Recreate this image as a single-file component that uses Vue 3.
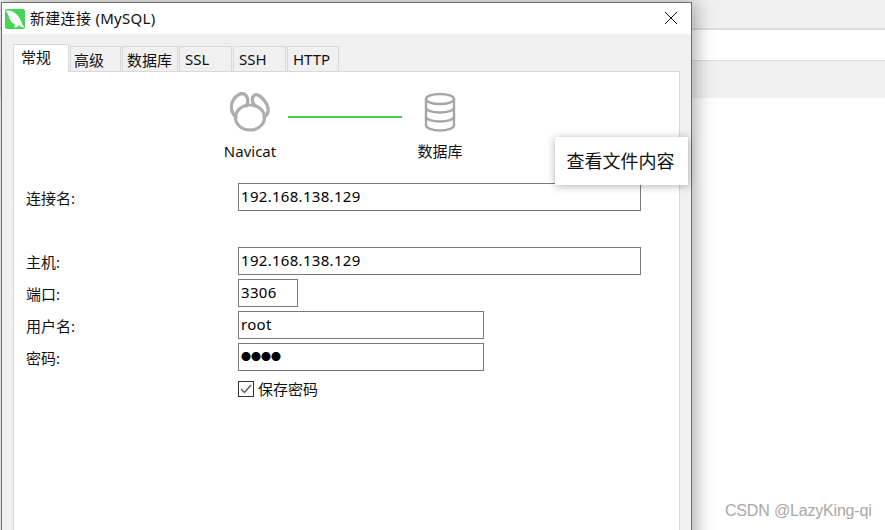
<script setup>
const tabs = ['常规', '高级', '数据库', 'SSL', 'SSH', 'HTTP']
</script>

<template>
  <div class="desktop">
    <div class="bg-top"></div>
    <div class="bg-white"></div>
    <div class="bg-gray"></div>

    <section class="win">
      <header class="title">
        <svg class="logo" viewBox="0 0 20 20" width="20" height="20">
          <rect width="20" height="20" rx="2" fill="#45d655" />
          <path d="M1 2C4 1 7 2 9 3.500C12 5 15 9 16 12C17 15 18 17 19.500 18.500C17 18.500 15 17.500 13.500 16L12.500 18C11.500 18.500 10 18.500 9 18C10 17 10 16 9.500 15C7 14 4.500 11 4 8C3.500 6 2.500 4 1 2Z" fill="#fff" />
        </svg>
        <span class="title-text">新建连接 (MySQL)</span>
        <svg class="close" viewBox="0 0 12 12" width="12" height="12">
          <path d="M0 0L12 12M12 0L0 12" stroke="#111" stroke-width="1" fill="none" />
        </svg>
      </header>

      <div class="body">
        <nav class="tabs">
          <span v-for="(t, i) in tabs" :key="t" class="tab" :class="['t' + i, { active: i === 0 }]">{{ t }}</span>
        </nav>

        <div class="panel">
          <div class="conn">
            <div class="node">
              <svg viewBox="0 0 40 40" width="40" height="40">
                <g fill="none" stroke="#adadad" stroke-width="3.2" stroke-linecap="round">
                  <path d="M6 25C1 21 0 14 3 8.500C6 3 12 0 15 2.500C18 5 18.500 9 16.500 14" />
                  <path d="M25 14C22 10 21.500 6 24 3.500C26 2 29 3 32 6C36 10 39 15 38 20C37.500 22 36 24 34 25" />
                  <ellipse cx="20" cy="25.500" rx="14.500" ry="12.500" />
                </g>
              </svg>
              <span class="node-label">Navicat</span>
            </div>
            <div class="link"></div>
            <div class="node db">
              <svg viewBox="0 0 32 40" width="32" height="40">
                <g fill="none" stroke="#a6a6a6" stroke-width="2.4">
                  <ellipse cx="16" cy="7" rx="14" ry="5" />
                  <path d="M2 7V33C2 36 8 38.500 16 38.500C24 38.500 30 36 30 33V7" />
                  <path d="M2 15.500C2 18.500 8 20.500 16 20.500C24 20.500 30 18.500 30 15.500" />
                  <path d="M2 24.500C2 27.500 8 29.500 16 29.500C24 29.500 30 27.500 30 24.500" />
                </g>
              </svg>
              <span class="node-label">数据库</span>
            </div>
          </div>

          <div class="form">
            <label class="lab">连接名:</label>
            <div class="field long">192.168.138.129</div>
            <div class="gap"></div>
            <label class="lab">主机:</label>
            <div class="field long">192.168.138.129</div>
            <label class="lab">端口:</label>
            <div class="field port">3306</div>
            <label class="lab">用户名:</label>
            <div class="field mid">root</div>
            <label class="lab">密码:</label>
            <div class="field mid dots">●●●●</div>
            <div class="check">
              <svg viewBox="0 0 16 16" width="16" height="16">
                <rect x="0.500" y="0.500" width="15" height="15" fill="#fff" stroke="#333" />
                <path d="M3 8L6.500 11.500L13 4" fill="none" stroke="#555" stroke-width="1.300" />
              </svg>
              <span class="check-text">保存密码</span>
            </div>
          </div>
        </div>
      </div>
    </section>

    <div class="tip">查看文件内容</div>
    <div class="mark">CSDN @LazyKing-qi</div>
  </div>
</template>

<style scoped>
.desktop {
  position: relative;
  width: 885px;
  height: 530px;
  overflow: hidden;
  background: #fff;
  font-family: "Noto Sans", "Noto Sans CJK SC", sans-serif;
  color: #111;
}
.bg-top {
  height: 28px;
  background: #f0f0f0;
  border-bottom: 2px solid #dedede;
}
.bg-white {
  height: 30px;
  background: #fff;
  border-bottom: 1px solid #dedede;
}
.bg-gray {
  height: 37px;
  background: #f0f0f0;
}
.win {
  position: absolute;
  left: 1px;
  top: 2px;
  width: 691px;
  height: 560px;
  box-sizing: border-box;
  display: flex;
  flex-direction: column;
  border: 1px solid #6e6e6e;
  background: #f0f0f0;
  box-shadow: 3px 0 18px rgba(0, 0, 0, 0.35);
}
.title {
  height: 31px;
  flex: none;
  display: flex;
  align-items: center;
  background: #fff;
  padding-left: 3px;
  padding-right: 14px;
}
.logo {
  flex: none;
  margin-top: 1px;
}
.title-text {
  margin-left: 5px;
  margin-bottom: 2px;
  font-size: 15px;
  letter-spacing: 0.3px;
  flex: 1;
}
.close {
  flex: none;
  margin-top: -2px;
}
.body {
  flex: 1;
  display: flex;
  flex-direction: column;
  padding: 10px 11px 0 11px;
  min-height: 0;
}
.tabs {
  display: flex;
  height: 27px;
  flex: none;
  align-items: flex-end;
  position: relative;
  z-index: 1;
  font-size: 15px;
}
.tab {
  box-sizing: border-box;
  height: 25px;
  margin-right: 1px;
  padding-left: 5px;
  border: 1px solid #d9d9d9;
  border-bottom: none;
  background: #f0f0f0;
  display: flex;
  align-items: center;
  white-space: nowrap;
}
.tab.active {
  height: 28px;
  background: #fff;
  margin-bottom: -1px;
  padding: 0 0 5px 7px;
}
.t0 { width: 56px; }
.t1 { width: 51px; padding-left: 3px; }
.t2 { width: 56px; padding-left: 4px; }
.t3 { width: 53px; }
.t4 { width: 53px; }
.t5 { width: 52px; }
.panel {
  flex: 1;
  background: #fff;
  border: 1px solid #d9d9d9;
}
.conn {
  display: flex;
  padding: 20px 0 0 196px;
  height: 91px;
  box-sizing: content-box;
}
.node {
  width: 80px;
  display: flex;
  flex-direction: column;
  align-items: center;
}
.db {
  width: 76px;
}
.node-label {
  margin-top: 9px;
  font-size: 15px;
  line-height: 20px;
}
.link {
  width: 114px;
  height: 2px;
  background: #44d04a;
  margin: 24px 0 0 -2px;
}
.form {
  display: grid;
  grid-template-columns: 212px auto;
  row-gap: 4px;
  justify-items: start;
  align-items: center;
  padding-left: 12px;
  font-size: 15px;
}
.lab {
  line-height: 28px;
  padding-top: 1px;
  margin-bottom: -1px;
}
.gap {
  grid-column: 1 / -1;
  height: 28px;
}
.field {
  box-sizing: border-box;
  height: 28px;
  border: 1px solid #7a7a7a;
  background: #fff;
  padding: 0 2px;
  line-height: 24px;
  font-size: 15px;
  letter-spacing: 0.3px;
  color: #000;
}
.long { width: 403px; }
.port { width: 60px; }
.mid { width: 246px; }
.dots {
  font-size: 10px;
  letter-spacing: 0;
  color: #000;
  line-height: 26px;
}
.check {
  grid-column: 2;
  display: flex;
  align-items: center;
  gap: 4px;
  margin-top: 4px;
  height: 20px;
}
.check-text {
  margin-bottom: 2px;
}
.tip {
  position: absolute;
  left: 555px;
  top: 137px;
  box-sizing: border-box;
  width: 133px;
  height: 48px;
  padding: 0 2px 2px 0;
  display: flex;
  align-items: center;
  justify-content: center;
  background: #fff;
  font-size: 18px;
  box-shadow: 0 1px 8px rgba(0, 0, 0, 0.3);
}
.mark {
  position: absolute;
  left: 725px;
  top: 501px;
  font-family: "Liberation Sans", sans-serif;
  font-size: 16px;
  letter-spacing: -0.18px;
  line-height: 20px;
  color: #a8a8a8;
}
</style>
